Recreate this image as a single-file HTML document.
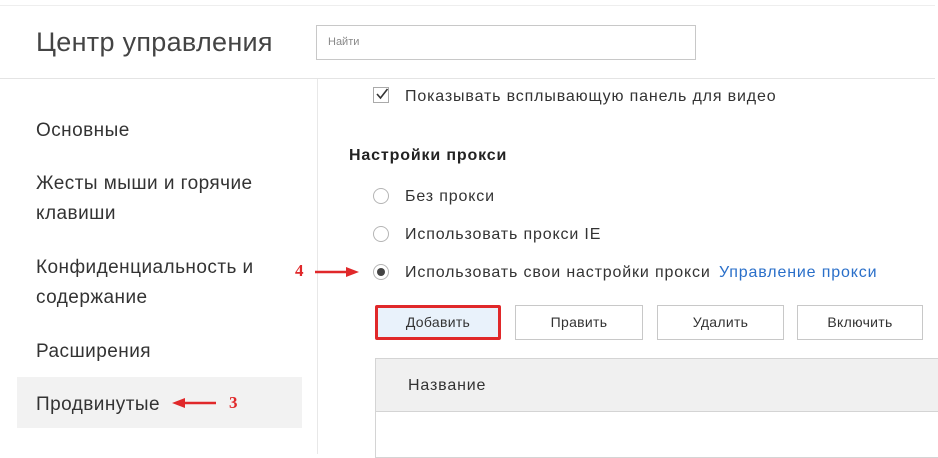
<!DOCTYPE html>
<html><head><meta charset="utf-8"><style>
*{margin:0;padding:0;box-sizing:border-box}
body{width:938px;height:454px;background:#fff;position:relative;overflow:hidden;font-family:"Liberation Sans",sans-serif;color:#333}
.a{position:absolute;white-space:nowrap}
.side{font-size:19px;color:#333;letter-spacing:0.45px}
.c{font-size:16px;color:#333;letter-spacing:0.85px}
.rad{position:absolute;width:16px;height:16px;border:1px solid #b5b5b5;border-radius:50%;background:#fff}
.btn{position:absolute;top:305px;height:35px;border:1px solid #c8c8c8;background:#fff;font-size:14px;color:#333;text-align:center;line-height:33px;letter-spacing:0.3px}
.red{color:#e0282a;font-family:"Liberation Serif",serif;font-weight:bold;font-size:17px}
</style></head><body>
<div class="a" style="left:0;top:5px;width:935px;height:1px;background:#eee"></div>
<div class="a" style="left:36px;top:27px;font-size:27px;color:#444;letter-spacing:0.3px">Центр управления</div>
<div class="a" style="left:316px;top:25px;width:380px;height:35px;border:1px solid #c8c8c8"></div>
<div class="a" style="left:328px;top:36px;font-size:11px;color:#888">Найти</div>
<div class="a" style="left:0;top:78px;width:935px;height:1px;background:#e4e4e4"></div>
<div class="a" style="left:317px;top:79px;width:1px;height:375px;background:#e8e8e8"></div>

<div class="a side" style="left:36px;top:120px">Основные</div>
<div class="a side" style="left:36px;top:173px">Жесты мыши и горячие</div>
<div class="a side" style="left:36px;top:203px">клавиши</div>
<div class="a side" style="left:36px;top:257px">Конфиденциальность и</div>
<div class="a side" style="left:36px;top:287px">содержание</div>
<div class="a side" style="left:36px;top:341px">Расширения</div>
<div class="a" style="left:17px;top:377px;width:285px;height:51px;background:#f2f2f2"></div>
<div class="a side" style="left:36px;top:394px">Продвинутые</div>

<div class="a" style="left:373px;top:87px;width:16px;height:16px;border:1px solid #aaa;background:#fff"></div>
<svg class="a" style="left:374px;top:86px" width="16" height="16"><path d="M3 8 L6.5 12 L13.5 3" fill="none" stroke="#333" stroke-width="1.6"/></svg>
<div class="a c" style="left:405px;top:88px">Показывать всплывающую панель для видео</div>
<div class="a c" style="left:349px;top:147px;font-weight:bold;color:#222">Настройки прокси</div>
<div class="rad" style="left:373px;top:188px"></div>
<div class="a c" style="left:405px;top:188px">Без прокси</div>
<div class="rad" style="left:373px;top:226px"></div>
<div class="a c" style="left:405px;top:226px">Использовать прокси IE</div>
<div class="rad" style="left:373px;top:264px"></div>
<div class="a" style="left:377px;top:268px;width:8px;height:8px;border-radius:50%;background:#444"></div>
<div class="a c" style="left:405px;top:264px">Использовать свои настройки прокси <span style="color:#2a6fc9;margin-left:3px">Управление прокси</span></div>

<div class="btn" style="left:375px;width:126px;background:#e9f2fb;border:3px solid #e0282a;border-radius:2px;line-height:29px">Добавить</div>
<div class="btn" style="left:515px;width:128px">Править</div>
<div class="btn" style="left:657px;width:127px">Удалить</div>
<div class="btn" style="left:797px;width:126px">Включить</div>

<div class="a" style="left:375px;top:358px;width:570px;height:100px;border:1px solid #d4d4d4"></div>
<div class="a" style="left:376px;top:359px;width:570px;height:53px;background:#f0f0f0;border-bottom:1px solid #d4d4d4"></div>
<div class="a c" style="left:408px;top:377px">Название</div>

<div class="a red" style="left:295px;top:261px">4</div>
<svg class="a" style="left:312px;top:265px" width="50" height="14"><path d="M3 7 H38" stroke="#e0282a" stroke-width="2.5"/><path d="M34 2 L47 7 L34 12 Z" fill="#e0282a"/></svg>
<div class="a red" style="left:229px;top:393px">3</div>
<svg class="a" style="left:168px;top:396px" width="52" height="14"><path d="M14 7 H48" stroke="#e0282a" stroke-width="2.5"/><path d="M17 2 L4 7 L17 12 Z" fill="#e0282a"/></svg>
</body></html>
